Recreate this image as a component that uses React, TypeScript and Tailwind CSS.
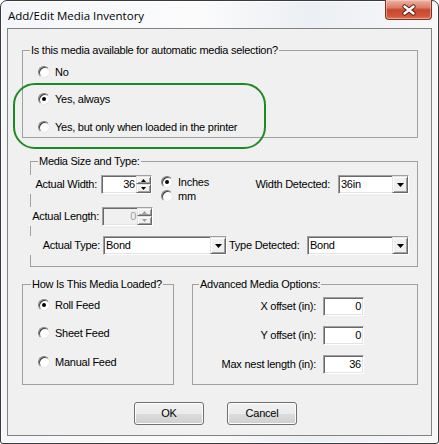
import type { ReactNode } from 'react';

// classic 3D edges used by the WinForms controls
const sunken = 'border border-t-[#a0a0a0] border-l-[#a0a0a0] border-r-white border-b-white shadow-[inset_1px_1px_0_#696969,inset_-1px_-1px_0_#e3e3e3]';
const raised = 'border border-t-[#e3e3e3] border-l-[#e3e3e3] border-r-[#696969] border-b-[#696969] shadow-[inset_1px_1px_0_#fff,inset_-1px_-1px_0_#a0a0a0] bg-[#f0f0f0]';

function Radio({ label, checked = false, className = '' }: { label: string; checked?: boolean; className?: string }) {
  return (
    <div className={`flex h-[14px] items-center ${className}`}>
      <span className="flex h-[12px] w-[12px] items-center justify-center rounded-full border border-t-[#808080] border-l-[#808080] border-r-[#e8e8e8] border-b-[#e8e8e8] bg-white shadow-[inset_1px_1px_0_#404040]">
        {checked && <span className="h-[4px] w-[4px] rounded-full bg-black" />}
      </span>
      <span className="ml-[5px] whitespace-nowrap">{label}</span>
    </div>
  );
}

function GroupBox({ title, legendClass, className, children }: { title: string; legendClass: string; className: string; children: ReactNode }) {
  return (
    <fieldset className={`border border-[#a0a0a0] ${className}`}>
      <legend className={`px-[1px] leading-[13px] ${legendClass}`}>{title}</legend>
      {children}
    </fieldset>
  );
}

function Triangle({ down = false, color = '#000' }: { down?: boolean; color?: string }) {
  return (
    <svg width="5" height="3" viewBox="0 0 5 3">
      <path d={down ? 'M0 0h5L2.5 3z' : 'M0 3h5L2.5 0z'} fill={color} />
    </svg>
  );
}

function SpinBox({ value, disabled = false }: { value: string; disabled?: boolean }) {
  const arrow = disabled ? '#a0a0a0' : '#000';
  return (
    <div className={`flex h-[19px] w-[51px] ${sunken} ${disabled ? 'bg-[#f0f0f0] text-[#a0a0a0]' : 'bg-white'}`}>
      <span className="flex-1 pr-[1px] pt-[2px] text-right leading-[13px]">{value}</span>
      <div className="flex w-[15px] flex-col">
        <span className={`flex h-[8px] items-center justify-center ${raised}`}>
          <Triangle color={arrow} />
        </span>
        <span className={`flex h-[9px] items-center justify-center ${raised}`}>
          <Triangle down color={arrow} />
        </span>
      </div>
    </div>
  );
}

function ComboBox({ value, className }: { value: string; className: string }) {
  return (
    <div className={`flex h-[19px] bg-white ${sunken} ${className}`}>
      <span className="flex-1 pl-[2px] pt-[2px] leading-[13px]">{value}</span>
      <span className={`flex w-[16px] items-center justify-center ${raised}`}>
        <svg width="7" height="4" viewBox="0 0 7 4">
          <path d="M0 0h7L3.5 4z" fill="#000" />
        </svg>
      </span>
    </div>
  );
}

function NumberField({ value }: { value: string }) {
  return (
    <div className={`ml-[6px] h-[19px] w-[41px] bg-white pr-[2px] pt-[2px] text-right leading-[13px] ${sunken}`}>
      {value}
    </div>
  );
}

function PushButton({ children, className = '' }: { children: ReactNode; className?: string }) {
  return (
    <button className={`h-[23px] w-[70px] rounded-[3px] border border-[#707070] bg-[linear-gradient(#f2f2f2,#ebebeb_50%,#dddddd_50%,#cfcfcf)] text-[11px] leading-[13px] tracking-[-0.2px] shadow-[inset_0_0_0_1px_#fcfcfc] ${className}`}>
      {children}
    </button>
  );
}

function CloseButton() {
  return (
    <div className="ml-auto mr-[6px] -mt-[1px] flex h-[20px] w-[47px] items-center justify-center rounded-b-[4px] border border-t-0 border-[#7d3226] bg-[linear-gradient(#eab6a8,#db7c66_40%,#c8472f_52%,#d2563b_85%,#e07b5c)] shadow-[inset_0_0_0_1px_rgba(255,220,210,0.45)]">
      <svg width="16" height="12" viewBox="0 0 16 12">
        <path d="M3.5 2.5 12.5 9.5M12.5 2.5 3.5 9.5" stroke="#5a1f16" strokeWidth="4.2" strokeLinecap="round" />
        <path d="M3.5 2.5 12.5 9.5M12.5 2.5 3.5 9.5" stroke="#fff" strokeWidth="2.4" strokeLinecap="round" />
      </svg>
    </div>
  );
}

export default function App() {
  return (
    <div className="h-[444px] w-[439px] bg-white font-['Liberation_Sans',Arial,sans-serif] text-black">
      <div className="h-[444px] w-[439px] rounded-t-[7px] rounded-b-[3px] border border-[#3a3a3a] bg-[linear-gradient(90deg,#f4f6f9,#fbfbfc_45%,#eceff3_70%,#f6f7f9)] shadow-[inset_0_0_0_1px_rgba(255,255,255,0.85)]">
        {/* caption */}
        <div className="flex h-[27px] items-start">
          <span className="ml-[7px] mt-[8px] font-['Open_Sans',sans-serif] text-[11.5px] leading-[14px]">Add/Edit Media Inventory</span>
          <CloseButton />
        </div>

        {/* client area */}
        <div className="relative mx-[6px] h-[408px] border border-[#838383] bg-[#f0f0f0] text-[11px] leading-[13px] tracking-[-0.25px]">
          <GroupBox title="Is this media available for automatic media selection?" legendClass="ml-[7px]" className="ml-[14px] mt-[15px] h-[94px] w-[396px]">
            <div className="flex flex-col pl-[15px] pt-[8px]">
              <Radio label="No" />
              <Radio checked label="Yes, always" className="mt-[13px]" />
              <Radio label="Yes, but only when loaded in the printer" className="mt-[14px]" />
            </div>
          </GroupBox>

          <GroupBox title="Media Size and Type:" legendClass="ml-[7px]" className="ml-[22px] mt-[17px] h-[112px] w-[388px]">
            <div className="mt-[7px] flex h-[19px] items-start">
              <span className="-ml-[2px] flex h-[19px] w-[72px] items-center justify-end bg-[#f0f0f0] pr-[4px]">Actual Width:</span>
              <SpinBox value="36" />
              <div className="ml-[9px] flex flex-col">
                <Radio checked label="Inches" />
                <Radio label="mm" />
              </div>
              <span className="ml-auto flex h-[19px] items-center">Width Detected:</span>
              <ComboBox value="36in" className="ml-[8px] mr-[8px] w-[71px]" />
            </div>
            <div className="mt-[13px] flex h-[19px]">
              <span className="-ml-[2px] flex h-[19px] w-[73px] items-center justify-end whitespace-nowrap bg-[#f0f0f0] pr-[3px]">Actual Length:</span>
              <SpinBox value="0" disabled />
            </div>
            <div className="mt-[10px] flex h-[19px]">
              <span className="-ml-[2px] flex h-[19px] w-[74px] items-center justify-end bg-[#f0f0f0] pr-[3px]">Actual Type:</span>
              <ComboBox value="Bond" className="w-[124px]" />
              <span className="ml-[2px] flex h-[19px] items-center">Type Detected:</span>
              <ComboBox value="Bond" className="ml-auto mr-[8px] w-[102px]" />
            </div>
          </GroupBox>

          <div className="mt-[11px] flex">
            <GroupBox title="How Is This Media Loaded?" legendClass="ml-[8px]" className="ml-[14px] h-[107px] w-[152px]">
              <div className="flex flex-col pl-[15px] pt-[7px]">
                <Radio checked label="Roll Feed" />
                <Radio label="Sheet Feed" className="mt-[14px]" />
                <Radio label="Manual Feed" className="mt-[15px]" />
              </div>
            </GroupBox>
            <GroupBox title="Advanced Media Options:" legendClass="ml-[6px]" className="ml-[18px] h-[107px] w-[226px]">
              <div className="mt-[6px] flex h-[19px] items-center">
                <span className="w-[124px] pr-[1px] text-right">X offset (in):</span>
                <NumberField value="0" />
              </div>
              <div className="mt-[10px] flex h-[19px] items-center">
                <span className="w-[124px] pr-[1px] text-right">Y offset (in):</span>
                <NumberField value="0" />
              </div>
              <div className="mt-[10px] flex h-[19px] items-center">
                <span className="w-[124px] pr-[1px] text-right">Max nest length (in):</span>
                <NumberField value="36" />
              </div>
            </GroupBox>
          </div>

          <div className="mt-[17px] flex">
            <PushButton className="ml-[126px]">OK</PushButton>
            <PushButton className="ml-[23px]">Cancel</PushButton>
          </div>

          {/* green callout ring around the two "Yes" options */}
          <div className="pointer-events-none absolute left-[5px] top-[54px] h-[66px] w-[253px] rounded-[22px] border-2 border-[#1f8a1f]" />
        </div>
      </div>
    </div>
  );
}
